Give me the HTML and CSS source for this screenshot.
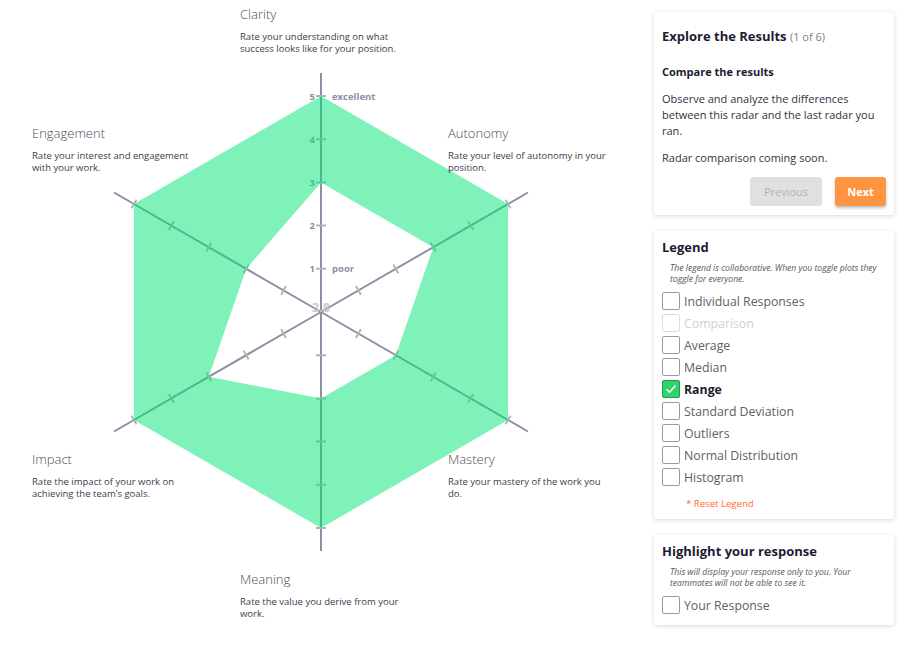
FILE: index.html
```html
<!DOCTYPE html>
<html lang="en">
<head>
<meta charset="utf-8">
<title>Radar results</title>
<link rel="stylesheet" href="styles.css">
</head>
<body>
<div class="page">
  <div class="chart">
    <svg class="radar" width="640" height="646" viewBox="0 0 640 646" xmlns="http://www.w3.org/2000/svg">
      <defs>
        <g id="ax">
          <line x1="321" y1="312" x2="321" y2="73" stroke="#8b90a5" stroke-width="2"/>
        </g>
        <g id="tk">
          <path d="M316 268.8H326M316 225.6H326M316 182.4H326M316 139.2H326M316 96H326" stroke="#b5b5b5" stroke-width="2" fill="none"/>
        </g>
      </defs>
      <use href="#ax"/>
      <use href="#ax" transform="rotate(60 321 312)"/>
      <use href="#ax" transform="rotate(120 321 312)"/>
      <use href="#ax" transform="rotate(180 321 312)"/>
      <use href="#ax" transform="rotate(240 321 312)"/>
      <use href="#ax" transform="rotate(300 321 312)"/>
      <use href="#tk"/>
      <use href="#tk" transform="rotate(60 321 312)"/>
      <use href="#tk" transform="rotate(120 321 312)"/>
      <use href="#tk" transform="rotate(180 321 312)"/>
      <use href="#tk" transform="rotate(240 321 312)"/>
      <use href="#tk" transform="rotate(300 321 312)"/>
      <g class="scale">
        <text x="315" y="99.5" text-anchor="end">5</text>
        <text x="315" y="142.7" text-anchor="end">4</text>
        <text x="315" y="185.9" text-anchor="end">3</text>
        <text x="315" y="229.1" text-anchor="end">2</text>
        <text x="315" y="272.3" text-anchor="end">1</text>
        <text x="332" y="99.5">excellent</text>
        <text x="332" y="272.3">poor</text>
      </g>
      <text class="avg" x="321" y="312" text-anchor="middle">3.8</text>
      <path class="range" fill-rule="evenodd" d="M321 96 L508.06 204 L508.06 420 L321 528 L133.94 420 L133.94 204 Z M321 182.4 L433.24 247.2 L395.82 355.2 L321 398.4 L208.76 376.8 L246.18 268.8 Z"/>
    </svg>

    <div class="dim dim-clarity">
      <div class="dim-title">Clarity</div>
      <div class="dim-desc">Rate your understanding on what<br>success looks like for your position.</div>
    </div>
    <div class="dim dim-engagement">
      <div class="dim-title">Engagement</div>
      <div class="dim-desc">Rate your interest and engagement<br>with your work.</div>
    </div>
    <div class="dim dim-autonomy">
      <div class="dim-title">Autonomy</div>
      <div class="dim-desc">Rate your level of autonomy in your<br>position.</div>
    </div>
    <div class="dim dim-impact">
      <div class="dim-title">Impact</div>
      <div class="dim-desc">Rate the impact of your work on<br>achieving the team’s goals.</div>
    </div>
    <div class="dim dim-mastery">
      <div class="dim-title">Mastery</div>
      <div class="dim-desc">Rate your mastery of the work you<br>do.</div>
    </div>
    <div class="dim dim-meaning">
      <div class="dim-title">Meaning</div>
      <div class="dim-desc">Rate the value you derive from your<br>work.</div>
    </div>
  </div>

  <aside class="side">
    <section class="card card-explore">
      <h2 class="card-title">Explore the Results <span class="count">(1 of 6)</span></h2>
      <h3 class="sub">Compare the results</h3>
      <p class="text">Observe and analyze the differences between this radar and the last radar you ran.</p>
      <p class="text">Radar comparison coming soon.</p>
      <div class="buttons">
        <button class="btn btn-prev" type="button">Previous</button>
        <button class="btn btn-next" type="button">Next</button>
      </div>
    </section>

    <section class="card card-legend">
      <h2 class="card-title">Legend</h2>
      <p class="note">The legend is collaborative. When you toggle plots they<br>toggle for everyone.</p>
      <ul class="checks">
        <li class="check"><span class="box"></span>Individual Responses</li>
        <li class="check disabled"><span class="box"></span>Comparison</li>
        <li class="check"><span class="box"></span>Average</li>
        <li class="check"><span class="box"></span>Median</li>
        <li class="check on"><span class="box"><svg width="12" height="10" viewBox="0 0 12 10"><path d="M1.5 5.2 L4.5 8.2 L10.5 1.5" fill="none" stroke="#fff" stroke-width="1.4"/></svg></span>Range</li>
        <li class="check"><span class="box"></span>Standard Deviation</li>
        <li class="check"><span class="box"></span>Outliers</li>
        <li class="check"><span class="box"></span>Normal Distribution</li>
        <li class="check"><span class="box"></span>Histogram</li>
      </ul>
      <div class="reset">* Reset Legend</div>
    </section>

    <section class="card card-highlight">
      <h2 class="card-title">Highlight your response</h2>
      <p class="note">This will display your response only to you. Your<br>teammates will not be able to see it.</p>
      <ul class="checks">
        <li class="check"><span class="box"></span>Your Response</li>
      </ul>
    </section>
  </aside>
</div>
</body>
</html>
```

FILE: styles.css
```css
* { box-sizing: border-box; }

html, body {
  margin: 0;
  padding: 0;
  background: #ffffff;
  font-family: "Open Sans", "Noto Sans", "Liberation Sans", sans-serif;
}

.page {
  display: flex;
  width: 919px;
  height: 646px;
}

.chart {
  position: relative;
  width: 654px;
  height: 646px;
  flex: none;
}

.radar {
  display: block;
}

.scale text {
  font-family: "Open Sans", "Liberation Sans", sans-serif;
  font-size: 9.5px;
  font-weight: 700;
  fill: #8a90a6;
}

.avg {
  font-family: "Open Sans", "Liberation Sans", sans-serif;
  font-size: 12.5px;
  font-weight: 700;
  fill: #c9c9cc;
}

.range {
  fill: rgba(0, 230, 115, 0.5);
}

.dim {
  position: absolute;
  white-space: nowrap;
}

.dim-title {
  font-size: 13px;
  font-weight: 300;
  line-height: 18px;
  color: #4d4d55;
}

.dim-desc {
  margin-top: 8px;
  font-size: 9.5px;
  line-height: 12px;
  color: #3d3d4a;
}

.dim-clarity { left: 240px; top: 5px; }
.dim-engagement { left: 32px; top: 124px; }
.dim-autonomy { left: 448px; top: 124px; }
.dim-impact { left: 32px; top: 450px; }
.dim-mastery { left: 448px; top: 450px; }
.dim-meaning { left: 240px; top: 570px; }

.side {
  width: 240px;
  flex: none;
  padding-top: 12px;
  display: flex;
  flex-direction: column;
  gap: 16px;
}

.card {
  background: #fff;
  border-radius: 3px;
  box-shadow: 0 1px 4px rgba(0, 0, 0, 0.16);
  padding: 7px 8px 9px;
}

.card-title {
  margin: 0;
  font-size: 13px;
  font-weight: 700;
  line-height: 18px;
  color: #1c1c33;
}

.count {
  font-size: 11px;
  font-weight: 400;
  color: #808080;
}

.card-explore {
  padding: 15px 8px 9px;
}

.sub {
  margin: 18px 0 0;
  font-size: 11px;
  font-weight: 700;
  line-height: 16px;
  color: #1c1c33;
}

.text {
  margin: 11px 0 0;
  font-size: 11px;
  line-height: 16px;
  color: #333340;
}

.buttons {
  margin-top: 11px;
  display: flex;
  justify-content: flex-end;
  gap: 13px;
}

.btn {
  height: 29px;
  border: none;
  border-radius: 3px;
  font-family: inherit;
  font-size: 11px;
  padding: 0;
}

.btn-prev {
  width: 72px;
  background: #e0e0e0;
  color: #b2b2b2;
}

.btn-next {
  width: 51px;
  background: #ff9442;
  color: #fff;
  font-weight: 700;
  box-shadow: 0 2px 3px rgba(0, 0, 0, 0.25);
}

.note {
  margin: 7px 0 0;
  padding-left: 8px;
  font-size: 8.6px;
  font-style: italic;
  line-height: 11px;
  color: #555560;
  white-space: nowrap;
}

.checks {
  list-style: none;
  margin: 5px 0 0;
  padding: 0;
}

.check {
  display: flex;
  align-items: center;
  height: 22px;
  gap: 4px;
  font-size: 12.3px;
  color: #606068;
}

.box {
  width: 18px;
  height: 18px;
  border: 1px solid #9a9a9a;
  border-radius: 2px;
  display: flex;
  align-items: center;
  justify-content: center;
  background: #fff;
}

.check.disabled {
  color: #cfcfcf;
}

.check.disabled .box {
  border-color: #dcdcdc;
}

.check.on {
  color: #1c1c33;
  font-weight: 700;
}

.check.on .box {
  background: #2fd46e;
  border-color: #1f9a4f;
}

.reset {
  margin-top: 10px;
  padding-left: 24px;
  font-size: 9.6px;
  line-height: 12px;
  color: #ff6a2c;
}
```
